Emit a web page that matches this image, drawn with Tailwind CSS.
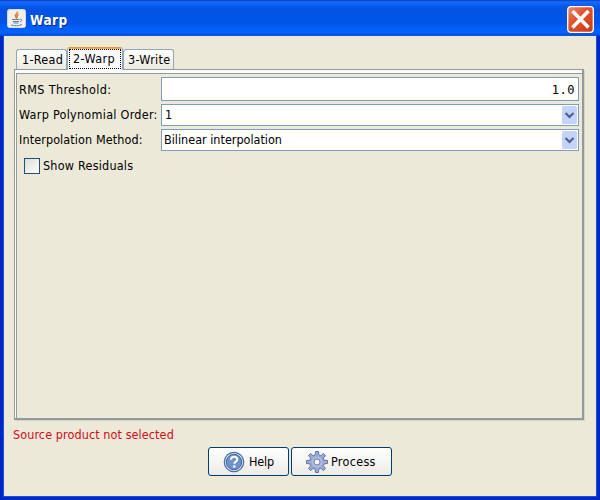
<!DOCTYPE html>
<html lang="en">
<head>
<meta charset="utf-8">
<title>Warp</title>
<script src="https://cdn.jsdelivr.net/npm/@tailwindcss/browser@4"></script>
</head>
<body class="w-[600px] h-[500px] overflow-hidden bg-[#0a3fd0] font-['DejaVu_Sans_Condensed','DejaVu_Sans',sans-serif] text-[12.5px] text-black leading-4 whitespace-nowrap">
<div class="w-[600px] h-[500px] flex flex-col bg-[#0026c4]">
  <header class="h-9 shrink-0 flex items-start pl-[7px] pr-[6px] bg-[linear-gradient(to_bottom,#0640c8_0px,#1a6cf5_2px,#0b5df0_5px,#0353e4_9px,#0054e5_22px,#0162fb_30px,#0160f6_33px,#0148d0_36px)]">
    <svg class="mt-[9px] w-[19px] h-[19px]" viewBox="0 0 19 19">
      <rect x=".5" y=".5" width="18" height="18" rx="2" fill="#f1f0ec" stroke="#d5dbe2"/>
      <path d="M10.500 2.500c1 2-3.500 3-2 5 .5 1 1.200 1.500.8 2.500M11.500 5.500c-2 1.200-2 2-.8 3.200" fill="none" stroke="#e0813c" stroke-width="1.500"/>
      <path d="M5 10.500h7.500M6 12.500h6M6.500 14h5M12.500 10.500c3-.8 3 1.500.5 2.200M4 16c3 1 8 1 11-.5" fill="none" stroke="#66839d" stroke-width="1"/>
    </svg>
    <h1 class="ml-[4px] mt-[12px] text-[13.5px] font-bold text-white tracking-[0.5px] [text-shadow:1px_1px_0_#0a2a8a]">Warp</h1>
    <svg class="ml-auto mt-[6px] w-[27px] h-[27px]" viewBox="0 0 27 27">
      <defs><linearGradient id="x" x1="0" y1="0" x2="1" y2="1"><stop offset="0" stop-color="#ed8a6c"/><stop offset=".4" stop-color="#e0532d"/><stop offset="1" stop-color="#c83a10"/></linearGradient></defs>
      <rect x=".7" y=".7" width="25.600" height="25.600" rx="3" fill="url(#x)" stroke="#fff" stroke-width="1.300"/>
      <path d="M5.500 5 21.500 21.500M21.500 5 5.500 21.500" stroke="#fff" stroke-width="3.600"/>
    </svg>
  </header>
  <main class="mx-1 mb-1 grow flex flex-col bg-[#ece9d8] shadow-[0_0_0_1px_#1450e0]">
    <nav class="h-[33px] shrink-0 flex items-end pl-[12px]">
      <div class="w-[51px] h-5 border border-b-0 border-[#91a7b4] rounded-t-[3px] bg-linear-to-b from-white to-[#eceae0] pl-[5px] pt-[2px]"><span class="tracking-[0.3px]">1-Read</span></div>
      <div class="w-[56px] h-[23px] -mb-px relative z-10 border border-t-0 border-b-0 border-[#91a7b4] rounded-t-[3px] bg-[#fcfcfe] overflow-hidden">
        <div class="h-[2px] bg-linear-to-b from-[#e68b2c] to-[#ffb83c]"></div>
        <div class="mx-px h-[20px] border border-dotted border-black pl-[3px] pt-px"><span class="tracking-[0.4px]">2-Warp</span></div>
      </div>
      <div class="w-[51px] h-5 border border-b-0 border-[#91a7b4] rounded-t-[3px] bg-linear-to-b from-white to-[#eceae0] pl-[4px] pt-[2px]"><span class="tracking-[0.3px]">3-Write</span></div>
    </nav>
    <section class="ml-[10px] w-[570px] h-[351px] shrink-0 border border-[#919b9c] border-r-2 border-b-2 bg-[#fcfcfe] pt-[3px] pl-px shadow-[1px_1px_0_#d5d4c8]">
      <div class="h-full border-l border-t border-[#919b9c] bg-[#ece9d8]">
        <div class="grid grid-cols-[144px_418px] gap-y-[3px] pt-[3px] items-center">
          <label class="pl-[2px] pt-px"><span class="tracking-[0.36px]">RMS Threshold:</span></label>
          <div class="h-6 border border-[#7f9db9] bg-white text-right pr-[3px] pt-[4px] font-['DejaVu_Sans_Mono',monospace] text-[12px] tracking-[0.5px]">1.0</div>
          <label class="pl-[2px]"><span class="tracking-[0.27px]">Warp Polynomial Order:</span></label>
          <div class="h-[22px] border border-[#7f9db9] bg-white flex items-center justify-between pl-[3px] pr-px"><span>1</span>
            <svg class="w-[15px] h-[18px]" viewBox="0 0 15 18"><rect width="15" height="18" rx="1.500" fill="#c3d3fb"/><path d="m3.500 7 4 4 4-4" fill="none" stroke="#4d6185" stroke-width="2.200"/></svg></div>
          <label class="pl-[2px]"><span class="tracking-[0.1px]">Interpolation Method:</span></label>
          <div class="h-[22px] border border-[#7f9db9] bg-white flex items-center justify-between pl-[2px] pr-px"><span class="tracking-[0px]">Bilinear interpolation</span>
            <svg class="w-[15px] h-[18px]" viewBox="0 0 15 18"><rect width="15" height="18" rx="1.500" fill="#c3d3fb"/><path d="m3.500 7 4 4 4-4" fill="none" stroke="#4d6185" stroke-width="2.200"/></svg></div>
        </div>
        <label class="mt-[7px] ml-[7px] flex items-center gap-[3px]"><span class="size-4 border border-[#1c5180] bg-linear-to-br from-[#dcdcd7] to-white"></span><span class="tracking-[0.22px]">Show Residuals</span></label>
      </div>
    </section>
    <p class="mt-[7px] ml-[9px] text-[#d00c18]"><span class="tracking-[0.09px]">Source product not selected</span></p>
    <footer class="mt-[4px] pl-[204px] flex gap-[2px]">
      <button class="w-[81px] h-[29px] border border-[#003c74] rounded-[3px] bg-linear-to-b from-white to-[#ecebe6] flex items-center pl-[14px] gap-[4px]">
        <svg class="w-[22px] h-[22px] shrink-0" viewBox="0 0 22 22"><circle cx="11" cy="11" r="9.700" fill="#dfe8f5" stroke="#466da8" stroke-width="1.200"/><circle cx="11" cy="11" r="7.700" fill="#6f93c8" stroke="#3d659f"/><path d="M8 8.700c0-4 6.300-3.800 6.300-.3 0 2.200-3 2.200-3 4.400" fill="none" stroke="#fff" stroke-width="2"/><circle cx="11.200" cy="15.500" r="1.250" fill="#fff"/></svg>
        <span class="tracking-[-0.2px]">Help</span></button>
      <button class="w-[101px] h-[29px] border border-[#003c74] rounded-[3px] bg-linear-to-b from-white to-[#ecebe6] flex items-center pl-[14px] gap-[3px]">
        <svg class="w-[22px] h-[22px] shrink-0" viewBox="-11 -11 22 22"><path d="M-1.800-7.200-1.500-10.500H1.500L1.800-7.200 3.800-6.300 6.400-8.500 8.500-6.400 6.300-3.800 7.200-1.800 10.500-1.500V1.500L7.200 1.800 6.300 3.800 8.500 6.400 6.400 8.500 3.800 6.300 1.800 7.200 1.500 10.500H-1.500L-1.800 7.200-3.800 6.300-6.400 8.500-8.500 6.400-6.300 3.800-7.200 1.800-10.500 1.500V-1.500L-7.200-1.800-6.300-3.800-8.500-6.400-6.400-8.500-3.800-6.300Z" fill="#9ba9d6" stroke="#62749f" stroke-width="1" stroke-linejoin="round"/><circle r="4.500" fill="none" stroke="#b4bfe2" stroke-width="1.500"/><circle r="3" fill="#f4f4f2" stroke="#687ba8" stroke-width=".9"/></svg>
        <span class="tracking-[0.3px]">Process</span></button>
    </footer>
  </main>
</div>
</body>
</html>
